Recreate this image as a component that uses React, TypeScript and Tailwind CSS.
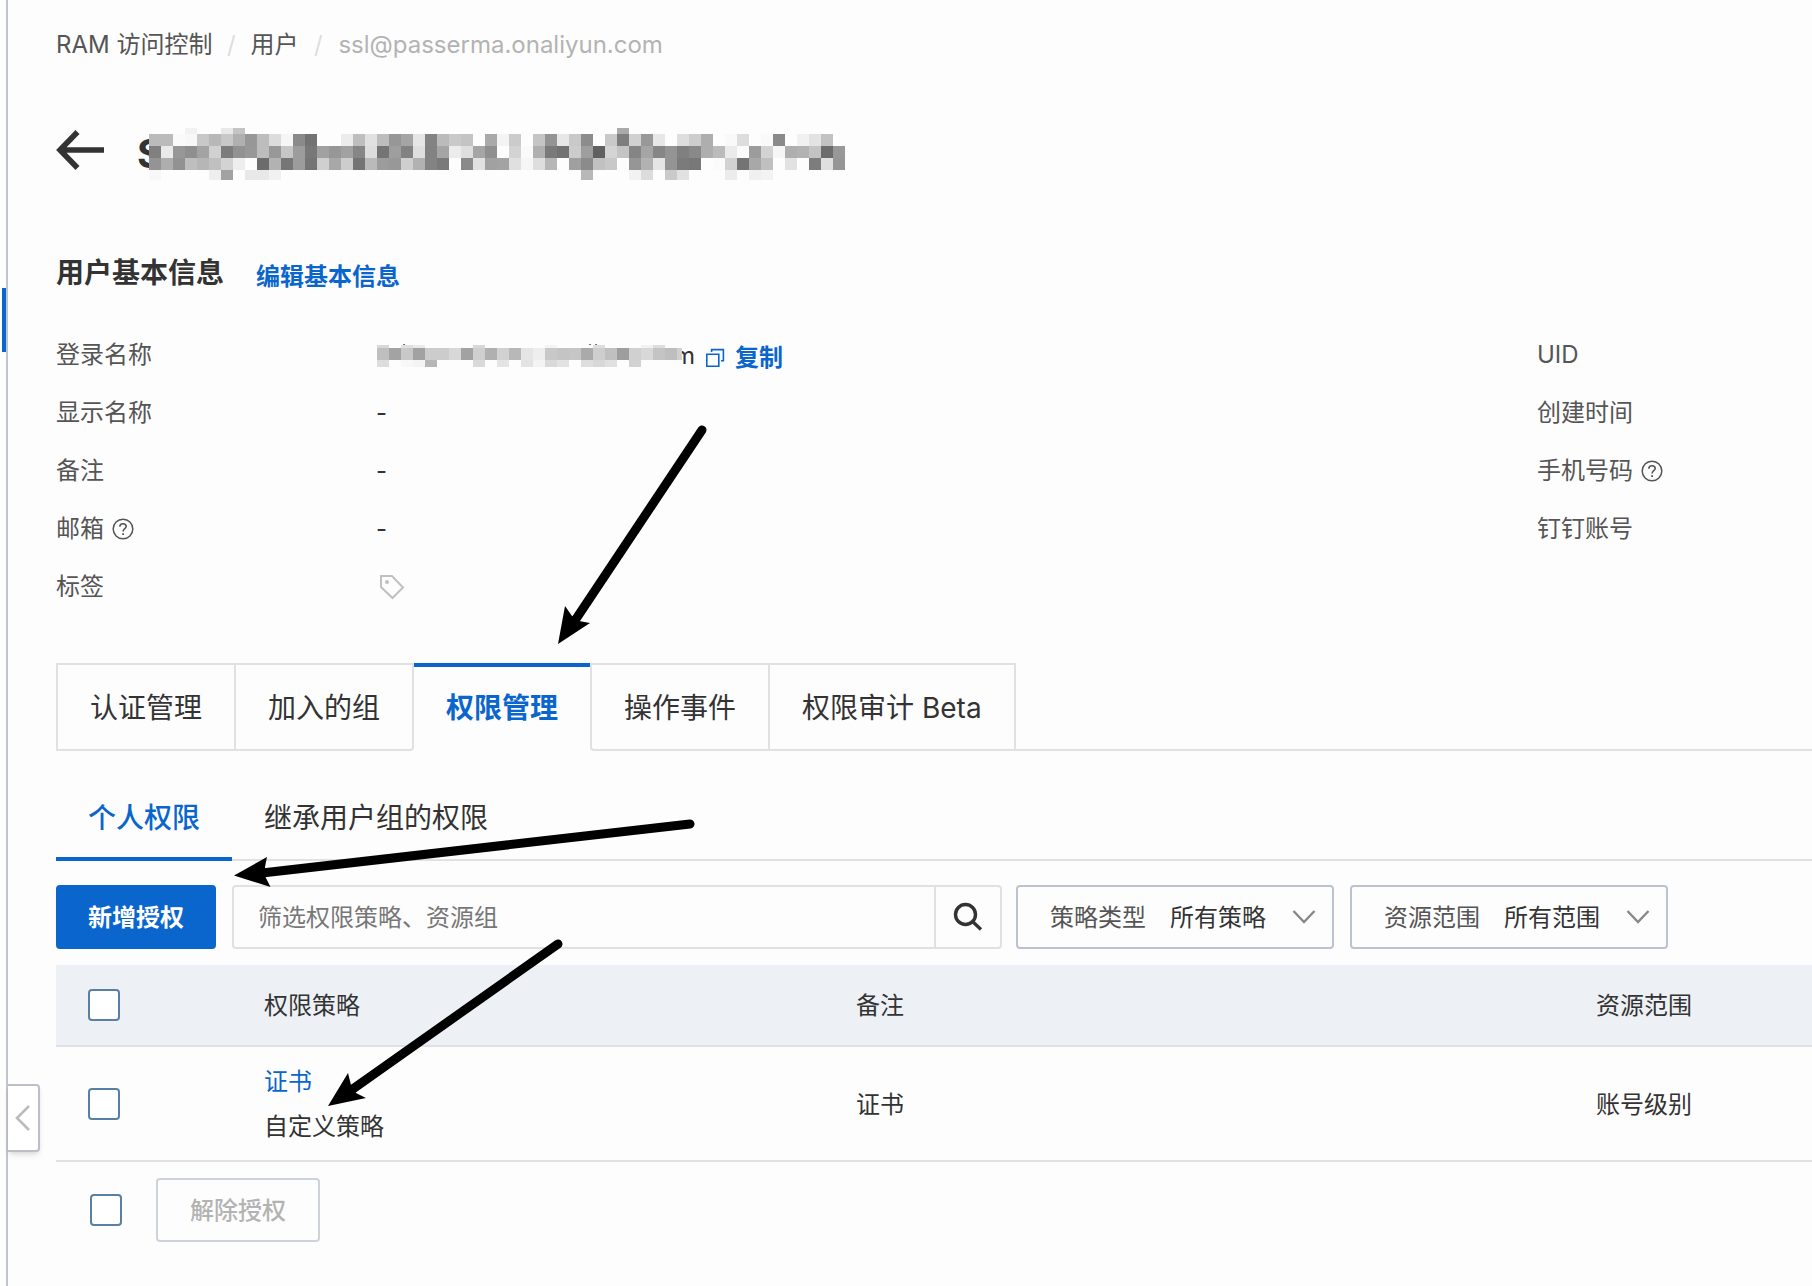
import React from "react";

type Block = { x: number; y: number; w: number; h: number; c: string };

/* Each row is a top, a height and a string with two hex digits of grey for every cell ("--" is blank). */
type MosaicRow = { y: number; h: number; cells: string };

function toBlocks(rows: MosaicRow[], cell: number): Block[] {
  return rows.flatMap((row) =>
    row.cells
      .split(" ")
      .map((v, i) => ({ v, i }))
      .filter(({ v }) => v !== "--")
      .map(({ v, i }) => ({ x: i * cell, y: row.y, w: cell, h: row.h, c: `#${v}${v}${v}` }))
  );
}

const titleRows: MosaicRow[] = [
  {
    y: 0,
    h: 6,
    cells:
      "-- -- -- f2 -- -- e8 c4 -- -- -- -- -- -- -- -- -- -- -- -- -- -- -- -- -- -- -- -- -- -- -- -- -- -- -- -- -- -- -- aa",
  },
  {
    y: 6,
    h: 12,
    cells:
      "bb bb fa f8 c8 b8 c8 b0 97 bd dc f6 8a 73 fd fd ec be e1 bd 97 a5 e6 83 bb c9 c4 fd a9 f4 cb fd c5 94 e7 c9 8c fd c9 7e d1 98 e7 fd de cd ae fd f9 dd fd fa 8a fd f1 e3 c2 fd",
  },
  {
    y: 18,
    h: 12,
    cells:
      "80 ea 97 8f a3 d1 7c 92 98 bd 98 c6 9c 78 a1 97 a1 86 dd 74 9e 82 df 82 a5 ec de a5 8f fd d3 fa b0 7a 72 cc 9e 60 d4 c4 85 a5 86 94 80 89 ae bb eb fb 9c d3 f6 ae b2 c3 6c 98",
  },
  {
    y: 30,
    h: 12,
    cells:
      "94 ae 92 be b6 c0 d3 ee fd 6c b2 76 9c 74 cf a8 cd 74 ba 9c 98 cf b2 83 7a fd 8a e1 a1 a3 e0 f6 de b6 fd a0 8b c1 c8 fd 96 b2 e5 94 7b 78 fd fb d2 74 a8 c0 fd e2 fd 7d e0 96",
  },
  {
    y: 42,
    h: 10,
    cells:
      "f8 -- -- -- -- ee a2 -- e8 e8 f1 -- -- -- -- -- -- -- -- -- -- -- -- -- -- -- -- -- -- -- -- -- -- -- -- -- b8 -- -- -- f2 dc -- ca e1 -- -- -- ec -- f0 f3",
  },
];

const loginRows: MosaicRow[] = [
  { y: 1, h: 3, cells: "d8 -- e0 eb -- -- -- -- d8 -- -- -- -- -- f4 -- -- -- de -- -- -- f2 de" },
  {
    y: 4,
    h: 12,
    cells: "bf a3 c8 a2 cc cc d8 a2 cf b0 d1 b8 e5 ee c8 c4 c6 aa ce c0 9e d0 d8 c4 be d0",
  },
  { y: 16, h: 7, cells: "dd -- f8 f4 b6 -- -- -- d9 -- e4 -- e3 f4 d9 e2 -- de d8 e0 -- d2 fd fd fd fd" },
];

function Blocks({ blocks }: { blocks: Block[] }) {
  return (
    <>
      {blocks.map((b) => (
        <rect key={`${b.x}-${b.y}`} x={b.x} y={b.y} width={b.w} height={b.h} fill={b.c} />
      ))}
    </>
  );
}

function TitleMask() {
  return (
    <svg
      aria-hidden="true"
      className="absolute left-[93px] top-0.5"
      width="708"
      height="52"
      shapeRendering="crispEdges"
    >
      <rect width="708" height="52" fill="#fdfdfd" />
      <Blocks blocks={toBlocks(titleRows, 12)} />
    </svg>
  );
}

function LoginMask() {
  return (
    <svg
      aria-hidden="true"
      className="relative z-10 block shrink-0"
      width="305"
      height="24"
      viewBox="0 0 305 24"
      shapeRendering="crispEdges"
    >
      <Blocks blocks={toBlocks(loginRows, 12)} />
      <rect x="26" y="0" width="2" height="1" fill="#777" />
      <rect x="212" y="0" width="2" height="1" fill="#777" />
      <rect x="218" y="0" width="2" height="1" fill="#777" />
    </svg>
  );
}

function BackIcon() {
  return (
    <svg width="48" height="40" viewBox="0 0 48 40" fill="none" stroke="#333" strokeWidth="5.6">
      <path d="M21.5 2 4 20l17.5 18M4 20h44" />
    </svg>
  );
}

function HelpIcon() {
  return (
    <svg width="22" height="22" viewBox="0 0 22 22" fill="none" stroke="#555" strokeWidth="1.5">
      <circle cx="11" cy="11" r="9.8" />
      <path d="M7.8 8.8c0-2 1.4-3.1 3.2-3.1s3.2 1.1 3.2 2.8c0 2.1-3.1 2.2-3.1 4.9" strokeWidth="1.6" />
      <path d="M10.2 15.3h1.8v1.8h-1.8z" fill="#555" stroke="none" />
    </svg>
  );
}

function CopyIcon() {
  return (
    <svg width="20" height="20" viewBox="0 0 20 20" fill="none" stroke="#0a66cc" strokeWidth="1.6">
      <path d="M1.8 6.3h12v12h-12zM6.6 4V1.6h11.8v11.2H16" />
    </svg>
  );
}

function TagIcon() {
  return (
    <svg width="26" height="26" viewBox="0 0 26 26" fill="none" stroke="#c0c0c0" strokeWidth="2">
      <path d="M2 2h11l11 11.5L13.5 24 2 13z" />
      <circle cx="8" cy="8" r="2" fill="#c0c0c0" stroke="none" />
    </svg>
  );
}

function SearchIcon() {
  return (
    <svg width="30" height="30" viewBox="0 0 30 30" fill="none" stroke="#333" strokeWidth="3.4">
      <circle cx="12.5" cy="12.5" r="10" />
      <path d="m19.5 19.5 8.5 8" />
    </svg>
  );
}

function ChevronDown() {
  return (
    <svg
      aria-hidden="true"
      className="pointer-events-none absolute right-4 top-1/2 -translate-y-1/2"
      width="24"
      height="14"
      viewBox="0 0 24 14"
      fill="none"
      stroke="#888"
      strokeWidth="2.4"
    >
      <path d="m1.5 1 10.5 11L22.5 1" />
    </svg>
  );
}

function Arrows() {
  return (
    <svg
      aria-hidden="true"
      className="pointer-events-none absolute left-0 top-0"
      width="760"
      height="1120"
      viewBox="0 0 760 1120"
      stroke="#000"
      strokeWidth="9"
      strokeLinecap="round"
    >
      <path d="M702 430 574 622" />
      <path d="M558 644l7-38 7 10 7 5 11 2z" stroke="none" />
      <path d="M690 824 262 873" />
      <path d="M234 875.5 267 857l-2 10v9l5.5 11z" stroke="none" />
      <path d="M558 944 350 1091" />
      <path d="M328 1106 348 1073l3 12 5 8 10 5z" stroke="none" />
    </svg>
  );
}

function Info({ label, help, children }: { label: string; help?: boolean; children?: React.ReactNode }) {
  return (
    <div className="flex h-[58px] items-center">
      <dt className="flex w-80 shrink-0 items-center gap-2 text-[#555]">
        {label}
        {help && (
          <button type="button" aria-label={`${label}说明`}>
            <HelpIcon />
          </button>
        )}
      </dt>
      <dd className="flex items-center">{children}</dd>
    </div>
  );
}

function Check({ label }: { label: string }) {
  return (
    <input
      type="checkbox"
      aria-label={label}
      className="block size-8 shrink-0 appearance-none rounded border-2 border-[#5a7fa5] bg-white checked:bg-[#0a66cc]"
    />
  );
}

function Filter({ id, label, options }: { id: string; label: string; options: string[] }) {
  return (
    <div className="relative flex h-16 w-[318px] shrink-0 items-center rounded border-2 border-[#bcc3ce] pl-8">
      <label htmlFor={id} className="shrink-0 pt-0.5 text-[#555]">
        {label}
      </label>
      <select
        id={id}
        className="h-full min-w-0 flex-1 appearance-none bg-transparent pl-6 pt-0.5 text-[#333] outline-none"
      >
        {options.map((o) => (
          <option key={o}>{o}</option>
        ))}
      </select>
      <ChevronDown />
    </div>
  );
}

const tab = "border-[#dfe1e3] px-8 text-[28px] leading-[42px] pt-[21px] pb-[19px]";

export default function App() {
  return (
    <div className="relative flex min-h-screen overflow-x-hidden bg-[#fdfdfd] font-['Inter','Noto_Sans_CJK_SC',sans-serif] text-2xl leading-8 text-[#333]">
      <aside className="w-2 shrink-0 border-r-2 border-[#c0c4cc] pl-0.5 pt-72">
        <div className="h-16 bg-[#0a66cc]" />
      </aside>

      <button
        type="button"
        aria-label="收起侧栏"
        className="absolute left-2 top-[1084px] flex h-[68px] w-8 items-center justify-center rounded-r border-2 border-l-0 border-[#bcbfc8] bg-white shadow-md"
      >
        <svg width="16" height="26" viewBox="0 0 16 26" fill="none" stroke="#bbb" strokeWidth="2.6">
          <path d="M14 1 2 13l12 12" />
        </svg>
      </button>

      <main className="min-w-0 flex-1 pl-12 pt-[29px]">
        <nav aria-label="面包屑" className="flex items-center text-[#555]">
          <a href="#ram">RAM 访问控制</a>
          <span className="w-[38px] text-center text-[#ddd]">/</span>
          <a href="#users">用户</a>
          <span className="w-10 text-center text-[#ddd]">/</span>
          <span className="text-[#b3b3b3]">ssl@passerma.onaliyun.com</span>
        </nav>

        <header className="relative mt-[65px] flex h-12 items-center">
          <button type="button" aria-label="返回">
            <BackIcon />
          </button>
          <h1 className="ml-[33px] pt-2 text-[40px] font-bold leading-10">S</h1>
          <TitleMask />
        </header>

        <div className="mt-[78px] flex h-10 items-center">
          <h2 className="pt-0.5 text-[28px] font-bold">用户基本信息</h2>
          <a href="#edit" className="ml-8 pt-2.5 font-bold text-[#0a66cc]">
            编辑基本信息
          </a>
        </div>

        <div className="mt-[34px] grid grid-cols-[1fr_275px]">
          <dl>
            <Info label="登录名称">
              <span className="ml-px flex items-center pt-0.5">
                <LoginMask />
                <span className="-ml-2">m</span>
              </span>
              <button type="button" className="ml-2.5 flex items-center gap-2.5 pt-1.5 font-bold text-[#0a66cc]">
                <CopyIcon />
                复制
              </button>
            </Info>
            <Info label="显示名称">-</Info>
            <Info label="备注">-</Info>
            <Info label="邮箱" help>
              -
            </Info>
            <Info label="标签">
              <button type="button" aria-label="编辑标签" className="ml-[3px]">
                <TagIcon />
              </button>
            </Info>
          </dl>
          <dl>
            <Info label="UID" />
            <Info label="创建时间" />
            <Info label="手机号码" help />
            <Info label="钉钉账号" />
          </dl>
        </div>

        <div role="tablist" className="mt-[47px] flex h-[88px] whitespace-nowrap">
          <button type="button" role="tab" aria-selected="false" className={`${tab} border-y-2 border-l-2`}>
            认证管理
          </button>
          <button type="button" role="tab" aria-selected="false" className={`${tab} rounded-br border-2`}>
            加入的组
          </button>
          <button
            type="button"
            role="tab"
            aria-selected="true"
            className="border-t-4 border-[#0a66cc] px-8 pb-[21px] pt-[19px] text-[28px] font-bold leading-[42px] text-[#0a66cc]"
          >
            权限管理
          </button>
          <button type="button" role="tab" aria-selected="false" className={`${tab} rounded-bl border-y-2 border-l-2`}>
            操作事件
          </button>
          <button type="button" role="tab" aria-selected="false" className={`${tab} border-2`}>
            权限审计 Beta
          </button>
          <div className="flex-1 border-b-2 border-[#dfe1e3]" />
        </div>

        <div role="tablist" className="flex h-[110px] items-stretch text-[28px] leading-[42px]">
          <button
            type="button"
            role="tab"
            aria-selected="true"
            className="border-b-4 border-[#0a66cc] px-8 pt-7 font-medium text-[#0a66cc]"
          >
            个人权限
          </button>
          <div className="flex flex-1 border-b-2 border-[#dfe1e3]">
            <button type="button" role="tab" aria-selected="false" className="px-8 pt-[26px]">
              继承用户组的权限
            </button>
          </div>
        </div>

        <div className="mt-6 flex gap-4">
          <button type="button" className="h-16 w-40 shrink-0 rounded bg-[#0a66cc] pt-0.5 font-bold text-white">
            新增授权
          </button>
          <form
            role="search"
            className="-mr-0.5 flex h-16 w-[770px] rounded border-2 border-[#dfe1e3]"
            onSubmit={(e) => e.preventDefault()}
          >
            <input
              type="text"
              aria-label="筛选权限策略、资源组"
              placeholder="筛选权限策略、资源组"
              className="min-w-0 flex-1 bg-transparent pl-6 pt-0.5 outline-none placeholder:text-[#777]"
            />
            <button
              type="submit"
              aria-label="搜索"
              className="flex w-[66px] items-center justify-center border-l-2 border-[#dfe1e3]"
            >
              <SearchIcon />
            </button>
          </form>
          <Filter id="policy-type" label="策略类型" options={["所有策略", "系统策略", "自定义策略"]} />
          <Filter id="scope" label="资源范围" options={["所有范围", "账号级别", "资源组级别"]} />
        </div>

        <table className="mt-4 w-full table-fixed text-left">
          <colgroup>
            <col className="w-[208px]" />
            <col className="w-[592px]" />
            <col />
            <col className="w-[216px]" />
          </colgroup>
          <thead>
            <tr className="h-[81px] border-b-2 border-[#dfe1e3] bg-[#edf1f6]">
              <th className="pl-8">
                <Check label="全选" />
              </th>
              <th className="pt-0.5 font-normal">权限策略</th>
              <th className="pt-0.5 font-normal">备注</th>
              <th className="pt-0.5 font-normal">资源范围</th>
            </tr>
          </thead>
          <tbody>
            <tr className="h-[115px] border-b-2 border-[#dfe1e3]">
              <td className="pl-8">
                <Check label="选择证书" />
              </td>
              <td className="leading-[45px]">
                <a href="#cert" className="block text-[#0a66cc]">
                  证书
                </a>
                自定义策略
              </td>
              <td className="pt-0.5">证书</td>
              <td className="pt-0.5">账号级别</td>
            </tr>
          </tbody>
        </table>

        <div className="flex items-center gap-[34px] pl-[34px] pt-4">
          <Check label="选择全部条目" />
          <button
            type="button"
            disabled
            className="h-16 w-[164px] rounded border-2 border-[#ced2d9] pt-0.5 font-medium text-[#b3b3b3]"
          >
            解除授权
          </button>
        </div>
      </main>

      <Arrows />
    </div>
  );
}
